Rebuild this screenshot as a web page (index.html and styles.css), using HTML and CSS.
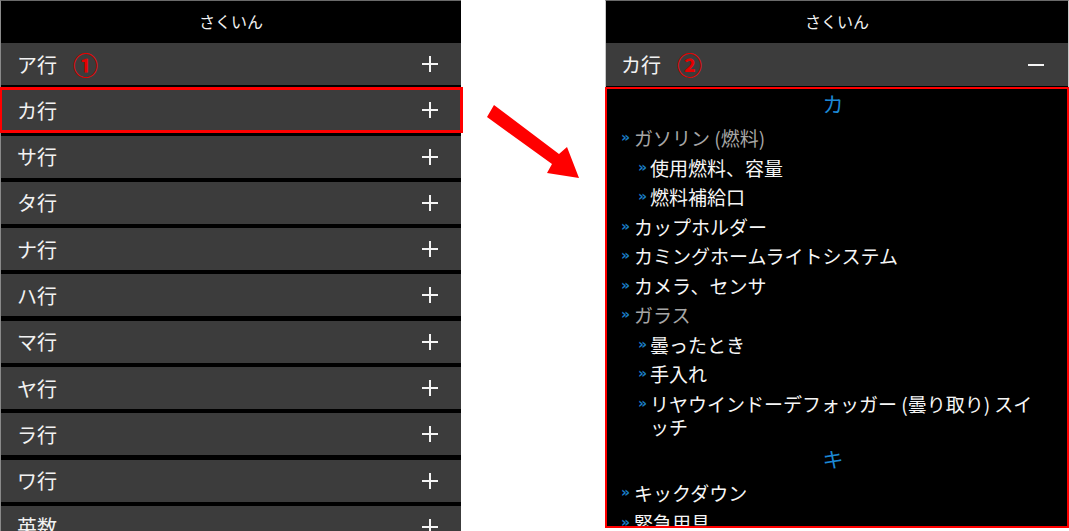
FILE: index.html
```html
<!DOCTYPE html>
<html lang="ja">
<head>
    <meta charset="UTF-8">
    <meta name="viewport" content="width=device-width, initial-scale=1.0">
    <title>さくいん</title>
    <link rel="stylesheet" href="styles.css">
</head>
<body>
    <div class="page">
        <!-- before: closed index -->
        <section class="panel panel-list">
            <header class="panel-title">さくいん</header>
            <ul class="rows">
                <li class="row"><span class="row-label">ア行</span><span class="step">①</span><svg class="toggle" viewBox="0 0 18 18"><path d="M9 1V17M1 9H17"/></svg></li>
                <li class="row row-marked"><span class="row-label">カ行</span><svg class="toggle" viewBox="0 0 18 18"><path d="M9 1V17M1 9H17"/></svg></li>
                <li class="row"><span class="row-label">サ行</span><svg class="toggle" viewBox="0 0 18 18"><path d="M9 1V17M1 9H17"/></svg></li>
                <li class="row"><span class="row-label">タ行</span><svg class="toggle" viewBox="0 0 18 18"><path d="M9 1V17M1 9H17"/></svg></li>
                <li class="row"><span class="row-label">ナ行</span><svg class="toggle" viewBox="0 0 18 18"><path d="M9 1V17M1 9H17"/></svg></li>
                <li class="row"><span class="row-label">ハ行</span><svg class="toggle" viewBox="0 0 18 18"><path d="M9 1V17M1 9H17"/></svg></li>
                <li class="row"><span class="row-label">マ行</span><svg class="toggle" viewBox="0 0 18 18"><path d="M9 1V17M1 9H17"/></svg></li>
                <li class="row"><span class="row-label">ヤ行</span><svg class="toggle" viewBox="0 0 18 18"><path d="M9 1V17M1 9H17"/></svg></li>
                <li class="row"><span class="row-label">ラ行</span><svg class="toggle" viewBox="0 0 18 18"><path d="M9 1V17M1 9H17"/></svg></li>
                <li class="row"><span class="row-label">ワ行</span><svg class="toggle" viewBox="0 0 18 18"><path d="M9 1V17M1 9H17"/></svg></li>
                <li class="row"><span class="row-label">英数</span><svg class="toggle" viewBox="0 0 18 18"><path d="M9 1V17M1 9H17"/></svg></li>
            </ul>
        </section>

        <div class="arrow-col">
            <svg class="arrow" viewBox="0 0 144 200">
                <polygon points="33,105 98,154 106,147 118,178 86,173 91,164 26,117"/>
            </svg>
        </div>

        <!-- after: カ行 opened -->
        <section class="panel panel-open">
            <header class="panel-title">さくいん</header>
            <div class="row"><span class="row-label">カ行</span><span class="step">②</span><svg class="toggle" viewBox="0 0 18 18"><path d="M1 9H17"/></svg></div>
            <div class="index-box">
                <h2 class="kana">カ</h2>
                <ul class="entries">
                    <li class="entry parent"><span>ガソリン (燃料)</span></li>
                    <li class="entry sub"><span>使用燃料、容量</span></li>
                    <li class="entry sub"><span>燃料補給口</span></li>
                    <li class="entry"><span>カップホルダー</span></li>
                    <li class="entry"><span>カミングホームライトシステム</span></li>
                    <li class="entry"><span>カメラ、センサ</span></li>
                    <li class="entry parent"><span>ガラス</span></li>
                    <li class="entry sub"><span>曇ったとき</span></li>
                    <li class="entry sub"><span>手入れ</span></li>
                    <li class="entry sub"><span>リヤウインドーデフォッガー (曇り取り) スイッチ</span></li>
                </ul>
                <h2 class="kana">キ</h2>
                <ul class="entries">
                    <li class="entry"><span>キックダウン</span></li>
                    <li class="entry"><span>緊急用具</span></li>
                </ul>
            </div>
        </section>
    </div>
</body>
</html>
```

FILE: styles.css
```css
body {
    font-family: "Noto Sans CJK JP", "Noto Sans", sans-serif;
    background-color: #fff;
    margin: 0;
    padding: 0;
}
.page {
    display: flex;
    height: 531px;
    overflow: hidden;
}
.panel {
    box-sizing: border-box;
    background-color: #000;
    color: #f2f2f2;
    border-top: 1px solid #6a6a6a;
}
.panel-list {
    width: 461px;
    border-left: 1px solid #8a8a8a;
}
.panel-open {
    width: 464px;
    height: 528px;
    border-left: 1px solid #c8c8c8;
    border-right: 1px solid #c8c8c8;
}
.panel-title {
    height: 42px;
    line-height: 40px;
    text-align: center;
    font-size: 16px;
}
.rows {
    list-style: none;
    margin: 0;
    padding: 0;
}
.row {
    display: flex;
    align-items: center;
    height: 42px;
    padding: 0 22px 0 16px;
    background-color: #3c3c3c;
    box-sizing: border-box;
}
.panel-open .row {
    height: 43px;
    padding-left: 15px;
    padding-right: 23px;
}
.rows .row + .row {
    margin-top: 4.3px;
}
.row-marked {
    outline: 3px solid #f00;
    outline-offset: -1px;
}
.row-label {
    font-size: 20px;
}
.step {
    margin-left: 16px;
    font-size: 25px;
    font-weight: bold;
    color: #e60000;
    line-height: 1;
}
.toggle {
    width: 18px;
    height: 18px;
    margin-left: auto;
    stroke: #f4f4f4;
    stroke-width: 2;
    fill: none;
}
.arrow-col {
    width: 144px;
}
.arrow {
    display: block;
    width: 144px;
    height: 200px;
    fill: #f00;
}
.index-box {
    height: 441px;
    margin: 1px -1px 0;
    padding: 0 22px 0 14px;
    border: 2px solid #f00;
    box-sizing: border-box;
    overflow: hidden;
}
.kana {
    margin: 3px 0 6px;
    font-size: 21px;
    font-weight: normal;
    line-height: 28px;
    text-align: center;
    color: #1c88d4;
}
.kana:first-child {
    margin-top: 0;
}
.entries {
    list-style: none;
    margin: 0;
    padding: 0;
}
.entry {
    display: flex;
    padding: 3.25px 0;
    font-size: 19px;
    line-height: 23px;
    color: #f6f6f6;
}
.entry::before {
    content: "»";
    flex: none;
    width: 13px;
    font-family: "DejaVu Sans", sans-serif;
    font-size: 14px;
    font-weight: bold;
    line-height: 23px;
    color: #1a7cc4;
}
.entry.parent {
    color: #a6a6a6;
}
.entry.sub {
    padding-left: 17px;
}
.entry.sub::before {
    width: 12px;
}
```
